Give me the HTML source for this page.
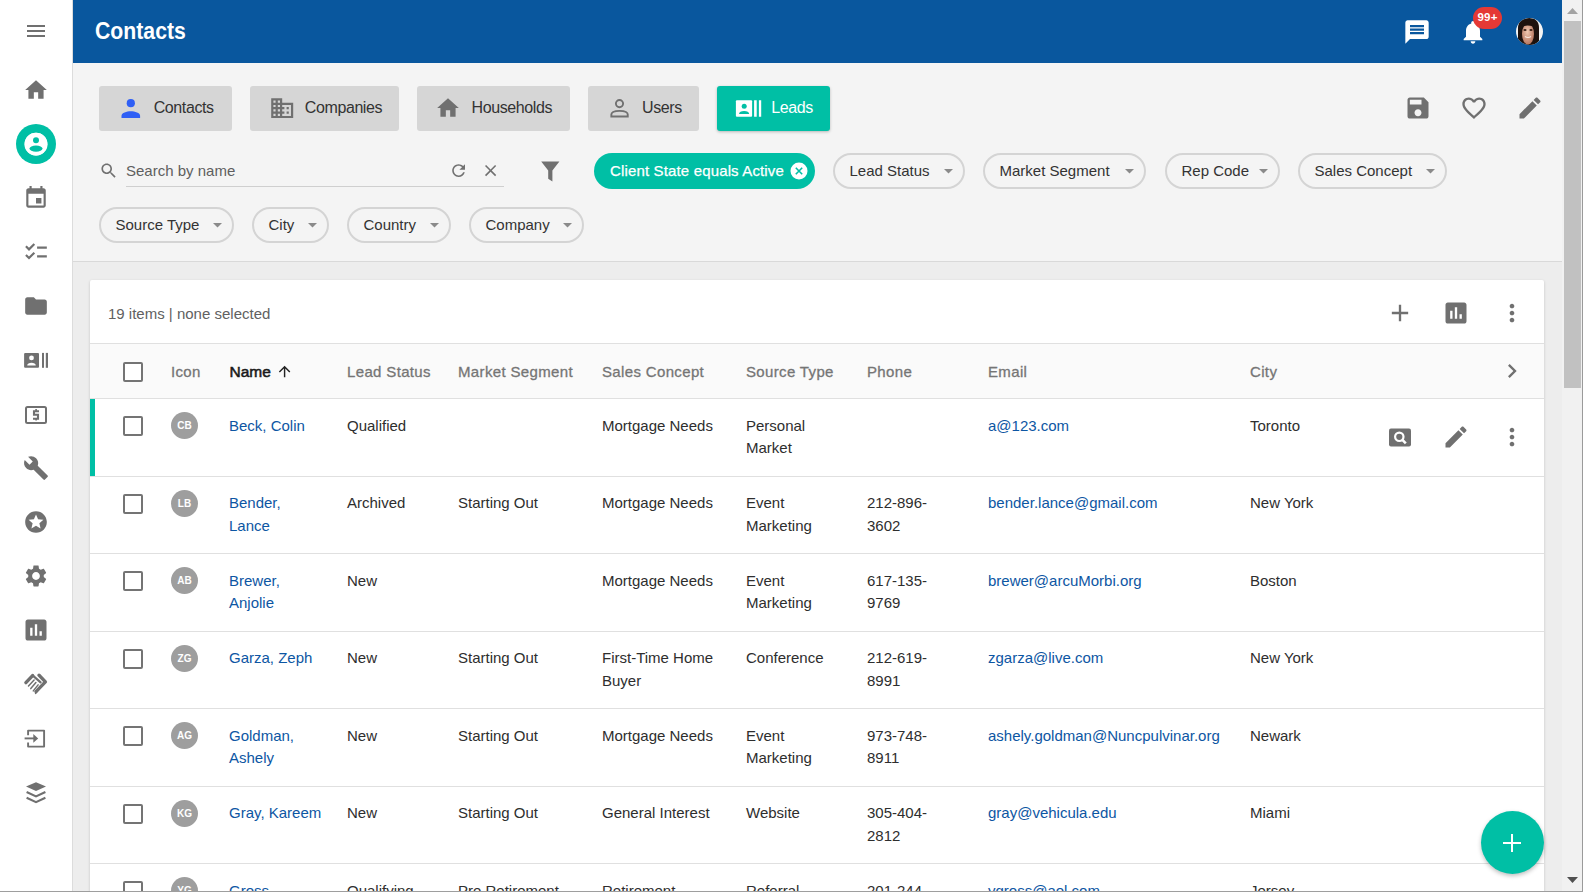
<!DOCTYPE html>
<html><head><meta charset="utf-8"><title>Contacts</title><style>
*{margin:0;padding:0;box-sizing:border-box}
html,body{width:1583px;height:892px;overflow:hidden;background:#fff;font-family:"Liberation Sans",sans-serif}
.ab{position:absolute}
svg.ab{display:block;overflow:visible}
.t{white-space:nowrap;font-size:15px;line-height:22.5px;color:#212121}
.title{font-size:24px;font-weight:bold;color:#fff;line-height:32px;transform:scaleX(0.885);transform-origin:0 0}
.tab{top:86px;height:45px;background:#d6d6d6;border-radius:3px}
.tab.act{background:#00bfa5;box-shadow:0 1px 3px rgba(0,0,0,.25)}
.tabt{font-size:16px;letter-spacing:-0.4px;color:#333;line-height:20px}
.w{color:#fff}
.ph{color:#5f5f5f;line-height:20px}
.chip{height:36px;border:2px solid #d4d4d4;border-radius:18px}
.chipt{line-height:20px;color:#333}
.chipt.w{color:#fff;-webkit-text-stroke:0.25px #fff;letter-spacing:0.15px}
.sub{color:#616161;line-height:20px}
.th{color:#757575;line-height:20px;letter-spacing:0.35px;-webkit-text-stroke:0.3px #757575}
.th.name{color:#1a1a1a;font-size:15.5px;-webkit-text-stroke:0.55px #1a1a1a;letter-spacing:0}
.td{color:#2e2e2e}
.link{color:#0d56a3}
.cb{width:20px;height:20px;border:2px solid #747474;border-radius:2px;background:#fff}
.av{width:27px;height:27px;border-radius:50%;background:#9e9e9e;color:#fff;font-size:10px;font-weight:bold;text-align:center;line-height:27px}
.card{background:#fff;border-radius:2px;box-shadow:0 1px 3px rgba(0,0,0,.18)}
.badge{left:1473px;top:7px;width:29px;height:22px;border-radius:11px;background:#e53935;color:#fff;font-size:11.5px;font-weight:bold;text-align:center;line-height:20.5px;letter-spacing:0.2px}
.fab{left:1481px;top:811px;width:63px;height:63px;border-radius:50%;background:#00bfa5;box-shadow:0 2px 4px rgba(0,0,0,.25)}
</style></head>
<body>
<div class="ab" style="left:0;top:0;width:73px;height:892px;background:#fff;border-right:1px solid #dcdcdc"></div>
<svg class="ab" style="left:24px;top:19px" width="24" height="24" viewBox="0 0 24 24" ><path fill="#707070" d="M3 18h18v-2H3v2zm0-5h18v-2H3v2zm0-7v2h18V6H3z"/></svg>
<svg class="ab" style="left:23px;top:77px" width="26" height="26" viewBox="0 0 24 24" ><path fill="#707070" d="M10 20v-6h4v6h5v-8h3L12 3 2 12h3v8z"/></svg>
<div class="ab" style="left:16px;top:124px;width:40px;height:40px;border-radius:50%;background:#00bfa5"></div>
<svg class="ab" style="left:16px;top:124px" width="40" height="40" viewBox="0 0 40 40"><circle cx="20" cy="20" r="10.2" fill="none" stroke="#fff" stroke-width="2.2"/><circle cx="20" cy="20.2" r="11.5" fill="#fff"/><circle cx="20" cy="16.3" r="3" fill="#00bfa5"/><ellipse cx="20" cy="24.6" rx="6.5" ry="3.1" fill="#00bfa5"/></svg>
<svg class="ab" style="left:23px;top:185px" width="26" height="26" viewBox="0 0 24 24" ><path fill="#707070" d="M17 12h-5v5h5v-5zM16 1v2H8V1H6v2H5c-1.11 0-1.99.9-1.99 2L3 19c0 1.1.89 2 2 2h14c1.1 0 2-.9 2-2V5c0-1.1-.9-2-2-2h-1V1h-2zm3 18H5V8h14v11z"/></svg>
<svg class="ab" style="left:23px;top:239px" width="26" height="26" viewBox="0 0 24 24" ><path fill="#707070" d="M22 7h-9v2h9V7zm0 8h-9v2h9v-2zM5.54 11L2 7.46l1.41-1.41 2.12 2.12 4.24-4.24 1.41 1.41L5.54 11zm0 8L2 15.46l1.41-1.41 2.12 2.12 4.24-4.24 1.41 1.41L5.54 19z"/></svg>
<svg class="ab" style="left:23px;top:293px" width="26" height="26" viewBox="0 0 24 24" ><path fill="#707070" d="M10 4H4c-1.1 0-1.99.9-1.99 2L2 18c0 1.1.9 2 2 2h16c1.1 0 2-.9 2-2V8c0-1.1-.9-2-2-2h-8l-2-2z"/></svg>
<svg class="ab" style="left:22px;top:350px" width="30" height="20" viewBox="0 0 30 20"><rect x="2.1" y="2.9" width="14.9" height="14.9" rx="1" fill="#707070"/><circle cx="9.5" cy="7.9" r="2.4" fill="#fff"/><path d="M5.2 15.6c0-1.9 2-2.8 4.3-2.8s4.3.9 4.3 2.8z" fill="#fff"/><rect x="20" y="2.9" width="2" height="14.9" fill="#707070"/><rect x="23.8" y="2.9" width="2.2" height="14.9" fill="#707070"/></svg>
<svg class="ab" style="left:24px;top:405px" width="24" height="20" viewBox="0 0 24 20"><rect x="2" y="2" width="20" height="16" rx="1.5" fill="none" stroke="#707070" stroke-width="2"/><path d="M15 6.2h-5v3.6h4v4H9" fill="none" stroke="#707070" stroke-width="2.1"/><rect x="11.3" y="4" width="1.6" height="2" fill="#707070"/><rect x="11.3" y="13.5" width="1.6" height="2" fill="#707070"/></svg>
<svg class="ab" style="left:23px;top:455px" width="26" height="26" viewBox="0 0 24 24" ><path fill="#707070" d="M22.7 19l-9.1-9.1c.9-2.3.4-5-1.5-6.9-2-2-5-2.4-7.4-1.3L9 6 6 9 1.6 4.7C.4 7.1.9 10.1 2.9 12.1c1.9 1.9 4.6 2.4 6.9 1.5l9.1 9.1c.4.4 1 .4 1.4 0l2.3-2.3c.5-.4.5-1.1.1-1.4z"/></svg>
<svg class="ab" style="left:23px;top:509px" width="26" height="26" viewBox="0 0 24 24" ><path fill="#707070" d="M11.99 2C6.47 2 2 6.48 2 12s4.47 10 9.99 10C17.52 22 22 17.52 22 12S17.52 2 11.99 2zm4.24 16L12 15.45 7.77 18l1.12-4.81-3.73-3.23 4.92-.42L12 5l1.92 4.53 4.92.42-3.73 3.23L16.23 18z"/></svg>
<svg class="ab" style="left:23px;top:563px" width="26" height="26" viewBox="0 0 24 24" ><path fill="#707070" d="M19.14 12.94c.04-.3.06-.61.06-.94 0-.32-.02-.64-.07-.94l2.03-1.58c.18-.14.23-.41.12-.61l-1.92-3.32c-.12-.22-.37-.29-.59-.22l-2.39.96c-.5-.38-1.03-.7-1.62-.94l-.36-2.54c-.04-.24-.24-.41-.48-.41h-3.84c-.24 0-.43.17-.47.41l-.36 2.54c-.59.24-1.13.57-1.62.94l-2.39-.96c-.22-.08-.47 0-.59.22L2.74 8.87c-.12.21-.08.47.12.61l2.03 1.58c-.05.3-.09.63-.09.94s.02.64.07.94l-2.030 1.58c-.18.14-.23.41-.12.61l1.92 3.32c.12.22.37.29.59.22l2.39-.96c.5.38 1.03.7 1.62.94l.36 2.54c.05.24.24.41.48.41h3.84c.24 0 .44-.17.47-.41l.36-2.54c.59-.24 1.13-.56 1.62-.94l2.39.96c.22.08.47 0 .59-.22l1.92-3.32c.12-.22.07-.47-.12-.61l-2.01-1.58zM12 15.6c-1.98 0-3.6-1.62-3.6-3.6s1.62-3.6 3.6-3.6 3.6 1.62 3.6 3.6-1.62 3.6-3.6 3.6z"/></svg>
<svg class="ab" style="left:22px;top:616px" width="28" height="28" viewBox="0 0 24 24" ><path fill="#707070" d="M19 3H5c-1.1 0-2 .9-2 2v14c0 1.1.9 2 2 2h14c1.1 0 2-.9 2-2V5c0-1.1-.9-2-2-2zM9 17H7v-7h2v7zm4 0h-2V7h2v10zm4 0h-2v-4h2v4z"/></svg>
<svg class="ab" style="left:20px;top:668px" width="32" height="32" viewBox="0 0 32 32"><g fill="none" stroke="#707070" stroke-linecap="round" stroke-linejoin="round"><path d="M5.9 14.6L12.6 7.6" stroke-width="3.4"/><path d="M12.6 7.4L20.6 14.4" stroke-width="2.2"/><path d="M19 7.2L25.4 13.9L16 23.6" stroke-width="3.4"/><path d="M14.1 12.1L8.5 18M15.9 14.5L10.8 20.6M18.1 16.9L13.3 22.9M20.2 19.3L15.6 25.4" stroke-width="1.5"/></g></svg>
<svg class="ab" style="left:20px;top:722px" width="32" height="32" viewBox="0 0 32 32"><g fill="none" stroke="#707070" stroke-width="1.9" stroke-linejoin="round"><path d="M8.1 13.2V8.6h16v16h-16v-4.2"/><path d="M4.6 16.4h9.5"/></g><path d="M13.3 12.1L18.2 16.4L13.3 20.7z" fill="#707070"/></svg>
<svg class="ab" style="left:20px;top:722px" width="32" height="86" viewBox="0 0 32 86"><path d="M6 64.6L16 60.2L26 64.6L16 69z" fill="#707070"/><path d="M6.6 70L16 74.4L25.4 70M6.6 75.8L16 80.2L25.4 75.8" fill="none" stroke="#707070" stroke-width="2.1"/></svg>
<div class="ab" style="left:73px;top:0;width:1489px;height:63px;background:#09579e"></div>
<div class="ab t title" style="left:95px;top:14.5px;">Contacts</div>
<svg class="ab" style="left:1403px;top:18px" width="28" height="28" viewBox="0 0 24 24" ><path fill="#fff" d="M20 2H4c-1.1 0-1.99.9-1.99 2L2 22l4-4h14c1.1 0 2-.9 2-2V4c0-1.1-.9-2-2-2zM18 14H6v-2h12v2zm0-3H6V9h12v2zm0-3H6V6h12v2z"/></svg>
<svg class="ab" style="left:1459px;top:18px" width="28" height="28" viewBox="0 0 24 24" ><path fill="#fff" d="M12 22c1.1 0 2-.9 2-2h-4c0 1.1.89 2 2 2zm6-6v-5c0-3.07-1.64-5.64-4.5-6.32V4c0-.83-.67-1.5-1.5-1.5s-1.5.67-1.5 1.5v.68C7.63 5.36 6 7.92 6 11v5l-2 2v1h16v-1l-2-2z"/></svg>
<div class="ab badge">99+</div>
<svg class="ab" style="left:1516px;top:18px" width="27" height="27" viewBox="0 0 27 27"><defs><clipPath id="av"><circle cx="13.5" cy="13.5" r="13.5"/></clipPath><radialGradient id="sk" cx="0.45" cy="0.4" r="0.6"><stop offset="0" stop-color="#f0c9b2"/><stop offset="1" stop-color="#b77760"/></radialGradient></defs><g clip-path="url(#av)"><rect width="27" height="27" fill="#f4f4f4"/><path d="M2 27V10C2 3 7 0 13 0s10 3 10 10v13l-4 4z" fill="#1d120e"/><ellipse cx="12" cy="16" rx="6" ry="10.5" fill="url(#sk)"/><path d="M6 9.5Q10 6 17 8.5L17 5Q10 3 6 7z" fill="#1d120e"/><ellipse cx="9" cy="12" rx="1.6" ry="0.9" fill="#3a2218"/><ellipse cx="15" cy="12" rx="1.6" ry="0.9" fill="#3a2218"/><path d="M9 18.5Q12 20.5 15 18.5" stroke="#fbe9e0" stroke-width="1.2" fill="none"/></g></svg>
<div class="ab" style="left:73px;top:63px;width:1489px;height:198px;background:#f4f4f4"></div>
<div class="ab" style="left:73px;top:261px;width:1489px;height:1px;background:#d9d9d9"></div>
<div class="ab" style="left:73px;top:262px;width:1489px;height:630px;background:#ededed"></div>
<div class="ab tab" style="left:99px;width:133px"></div>
<div class="ab t tabt" style="left:153.7px;top:98.3px;">Contacts</div>
<div class="ab tab" style="left:250px;width:149px"></div>
<div class="ab t tabt" style="left:304.8px;top:98.3px;">Companies</div>
<div class="ab tab" style="left:417px;width:153px"></div>
<div class="ab t tabt" style="left:471.6px;top:98.3px;">Households</div>
<div class="ab tab" style="left:588px;width:111px"></div>
<div class="ab t tabt" style="left:642px;top:98.3px;">Users</div>
<div class="ab tab act" style="left:717px;width:113px"></div>
<div class="ab t tabt w" style="left:771.3px;top:98.3px;">Leads</div>
<svg class="ab" style="left:119px;top:97px" width="24" height="24" viewBox="0 0 24 24"><circle cx="11.8" cy="6.2" r="4.1" fill="#2f5ff5"/><path d="M2.5 21v-2.2c0-3 5.2-4.6 9.3-4.6s9.3 1.6 9.3 4.6V21z" fill="#2f5ff5"/></svg>
<svg class="ab" style="left:268.6px;top:95.2px" width="26.4" height="26.4" viewBox="0 0 24 24" ><path fill="#707070" d="M12 7V3H2v18h20V7H12zM6 19H4v-2h2v2zm0-4H4v-2h2v2zm0-4H4V9h2v2zm0-4H4V5h2v2zm4 12H8v-2h2v2zm0-4H8v-2h2v2zm0-4H8V9h2v2zm0-4H8V5h2v2zm10 12h-8v-2h2v-2h-2v-2h2v-2h-2V9h8v10zm-2-8h-2v2h2v-2zm0 4h-2v2h2v-2z"/></svg>
<svg class="ab" style="left:435px;top:95px" width="26" height="26" viewBox="0 0 24 24" ><path fill="#707070" d="M10 20v-6h4v6h5v-8h3L12 3 2 12h3v8z"/></svg>
<svg class="ab" style="left:607px;top:96px" width="24" height="24" viewBox="0 0 24 24"><circle cx="12.5" cy="7.6" r="3.6" fill="none" stroke="#707070" stroke-width="1.9"/><path d="M4.35 20.45V18.6c0-2.4 3.7-3.75 8.2-3.75s8.2 1.35 8.2 3.75v1.85z" fill="none" stroke="#707070" stroke-width="1.9"/></svg>
<svg class="ab" style="left:734px;top:98px" width="30" height="20" viewBox="0 0 30 20"><rect x="1.9" y="2.25" width="16.2" height="16.5" rx="1" fill="#fff"/><circle cx="10.2" cy="8.2" r="2.5" fill="#00bfa5"/><path d="M5 15.9c0-2 2.2-3 5.1-3s5.1 1 5.1 3z" fill="#00bfa5"/><rect x="20.1" y="2.25" width="2.6" height="16.5" fill="#fff"/><rect x="24.9" y="2.25" width="2.3" height="16.5" fill="#fff"/></svg>
<svg class="ab" style="left:1404px;top:94px" width="28" height="28" viewBox="0 0 24 24" ><path fill="#707070" d="M17 3H5c-1.11 0-2 .9-2 2v14c0 1.1.89 2 2 2h14c1.1 0 2-.9 2-2V7l-4-4zm-5 16c-1.66 0-3-1.34-3-3s1.34-3 3-3 3 1.34 3 3-1.34 3-3 3zm3-10H5V5h10v4z"/></svg>
<svg class="ab" style="left:1460px;top:94px" width="28" height="28" viewBox="0 0 24 24" ><path fill="#707070" d="M16.5 3c-1.74 0-3.410.81-4.5 2.09C10.91 3.81 9.24 3 7.5 3 4.42 3 2 5.42 2 8.5c0 3.78 3.4 6.86 8.55 11.54L12 21.35l1.45-1.32C18.6 15.36 22 12.28 22 8.5 22 5.42 19.58 3 16.5 3zm-4.4 15.55l-.1.1-.1-.1C7.14 14.24 4 11.39 4 8.5 4 6.5 5.5 5 7.5 5c1.54 0 3.04.99 3.57 2.36h1.87C13.46 5.990 14.96 5 16.5 5c2 0 3.5 1.5 3.5 3.5 0 2.89-3.14 5.74-7.9 10.05z"/></svg>
<svg class="ab" style="left:1516px;top:94px" width="28" height="28" viewBox="0 0 24 24" ><path fill="#707070" d="M3 17.25V21h3.75L17.81 9.94l-3.75-3.75L3 17.25zM20.71 7.04c.39-.39.39-1.02 0-1.41l-2.34-2.34c-.39-.39-1.02-.39-1.41 0l-1.83 1.83 3.75 3.75 1.83-1.83z"/></svg>
<svg class="ab" style="left:99px;top:161.3px" width="19.5" height="19.5" viewBox="0 0 24 24" ><path fill="#707070" d="M15.5 14h-.79l-.28-.27C15.41 12.59 16 11.11 16 9.5 16 5.91 13.09 3 9.5 3S3 5.91 3 9.5 5.91 16 9.5 16c1.61 0 3.09-.59 4.23-1.57l.27.28v.79l5 4.99L20.49 19l-4.99-5zm-6 0C7.01 14 5 11.99 5 9.5S7.01 5 9.5 5 14 7.01 14 9.5 11.990 14 9.5 14z"/></svg>
<div class="ab t ph" style="left:126px;top:161px;">Search by name</div>
<div class="ab" style="left:126px;top:186px;width:378px;height:1px;background:#cfcfcf"></div>
<svg class="ab" style="left:449.3px;top:161.3px" width="19.2" height="19.2" viewBox="0 0 24 24" ><path fill="#707070" d="M17.65 6.35C16.2 4.9 14.21 4 12 4c-4.42 0-7.99 3.58-7.99 8s3.57 8 7.99 8c3.73 0 6.84-2.55 7.73-6h-2.08c-.82 2.33-3.04 4-5.65 4-3.31 0-6-2.69-6-6s2.69-6 6-6c1.66 0 3.14.69 4.22 1.78L13 11h7V4l-2.35 2.35z"/></svg>
<svg class="ab" style="left:480.8px;top:161.3px" width="19.2" height="19.2" viewBox="0 0 24 24" ><path fill="#707070" d="M19 6.41L17.59 5 12 10.59 6.41 5 5 6.41 10.59 12 5 17.59 6.41 19 12 13.41 17.59 19 19 17.59 13.41 12z"/></svg>
<svg class="ab" style="left:540px;top:160px" width="20" height="22" viewBox="0 0 20 22"><path d="M1.2 1.4H19.4L12.4 10.6V21.4L8.2 18.7V10.6Z" fill="#707070"/></svg>
<div class="ab" style="left:594px;top:153px;width:221px;height:36px;border-radius:18px;background:#00bfa5"></div>
<div class="ab t chipt w" style="left:610px;top:161px;">Client State equals Active</div>
<svg class="ab" style="left:790px;top:162px" width="18" height="18" viewBox="0 0 18 18"><circle cx="9" cy="9" r="8.5" fill="#fff"/><path d="M5.8 5.8l6.4 6.4M12.2 5.8l-6.4 6.4" stroke="#00bfa5" stroke-width="1.6"/></svg>
<div class="ab chip" style="left:833px;top:153px;width:132px"></div>
<div class="ab t chipt" style="left:849.5px;top:161px;">Lead Status</div>
<svg class="ab" style="left:944px;top:169px" width="9" height="5" viewBox="0 0 9 5"><path d="M0 0h9L4.5 4.5z" fill="#8a8a8a"/></svg>
<div class="ab chip" style="left:983px;top:153px;width:163px"></div>
<div class="ab t chipt" style="left:999.5px;top:161px;">Market Segment</div>
<svg class="ab" style="left:1125px;top:169px" width="9" height="5" viewBox="0 0 9 5"><path d="M0 0h9L4.5 4.5z" fill="#8a8a8a"/></svg>
<div class="ab chip" style="left:1165px;top:153px;width:115px"></div>
<div class="ab t chipt" style="left:1181.5px;top:161px;">Rep Code</div>
<svg class="ab" style="left:1259px;top:169px" width="9" height="5" viewBox="0 0 9 5"><path d="M0 0h9L4.5 4.5z" fill="#8a8a8a"/></svg>
<div class="ab chip" style="left:1298px;top:153px;width:149px"></div>
<div class="ab t chipt" style="left:1314.5px;top:161px;">Sales Concept</div>
<svg class="ab" style="left:1426px;top:169px" width="9" height="5" viewBox="0 0 9 5"><path d="M0 0h9L4.5 4.5z" fill="#8a8a8a"/></svg>
<div class="ab chip" style="left:99px;top:207px;width:135px"></div>
<div class="ab t chipt" style="left:115.5px;top:215px;">Source Type</div>
<svg class="ab" style="left:213px;top:223px" width="9" height="5" viewBox="0 0 9 5"><path d="M0 0h9L4.5 4.5z" fill="#8a8a8a"/></svg>
<div class="ab chip" style="left:252px;top:207px;width:77px"></div>
<div class="ab t chipt" style="left:268.5px;top:215px;">City</div>
<svg class="ab" style="left:308px;top:223px" width="9" height="5" viewBox="0 0 9 5"><path d="M0 0h9L4.5 4.5z" fill="#8a8a8a"/></svg>
<div class="ab chip" style="left:347px;top:207px;width:104px"></div>
<div class="ab t chipt" style="left:363.5px;top:215px;">Country</div>
<svg class="ab" style="left:430px;top:223px" width="9" height="5" viewBox="0 0 9 5"><path d="M0 0h9L4.5 4.5z" fill="#8a8a8a"/></svg>
<div class="ab chip" style="left:469px;top:207px;width:115px"></div>
<div class="ab t chipt" style="left:485.5px;top:215px;">Company</div>
<svg class="ab" style="left:563px;top:223px" width="9" height="5" viewBox="0 0 9 5"><path d="M0 0h9L4.5 4.5z" fill="#8a8a8a"/></svg>
<div class="ab card" style="left:90px;top:280px;width:1454px;height:640px"></div>
<div class="ab t sub" style="left:108px;top:304px;">19 items | none selected</div>
<svg class="ab" style="left:1386px;top:299px" width="28" height="28" viewBox="0 0 24 24" ><path fill="#707070" d="M19 13h-6v6h-2v-6H5v-2h6V5h2v6h6v2z"/></svg>
<svg class="ab" style="left:1442px;top:299px" width="28" height="28" viewBox="0 0 24 24" ><path fill="#707070" d="M19 3H5c-1.1 0-2 .9-2 2v14c0 1.1.9 2 2 2h14c1.1 0 2-.9 2-2V5c0-1.1-.9-2-2-2zM9 17H7v-7h2v7zm4 0h-2V7h2v10zm4 0h-2v-4h2v4z"/></svg>
<svg class="ab" style="left:1498px;top:299px" width="28" height="28" viewBox="0 0 24 24" ><path fill="#707070" d="M12 8c1.1 0 2-.9 2-2s-.9-2-2-2-2 .9-2 2 .9 2 2 2zm0 2c-1.1 0-2 .9-2 2s.9 2 2 2 2-.9 2-2-.9-2-2-2zm0 6c-1.1 0-2 .9-2 2s.9 2 2 2 2-.9 2-2-.9-2-2-2z"/></svg>
<div class="ab" style="left:90px;top:343px;width:1454px;height:1px;background:#e0e0e0"></div>
<div class="ab" style="left:90px;top:344px;width:1454px;height:54px;background:#fafafa"></div>
<div class="ab" style="left:90px;top:398px;width:1454px;height:1px;background:#e0e0e0"></div>
<div class="ab cb" style="left:123px;top:362px"></div>
<div class="ab t th" style="left:171px;top:362px;">Icon</div>
<div class="ab t th" style="left:347px;top:362px;">Lead Status</div>
<div class="ab t th" style="left:458px;top:362px;">Market Segment</div>
<div class="ab t th" style="left:602px;top:362px;">Sales Concept</div>
<div class="ab t th" style="left:746px;top:362px;">Source Type</div>
<div class="ab t th" style="left:867px;top:362px;">Phone</div>
<div class="ab t th" style="left:988px;top:362px;">Email</div>
<div class="ab t th" style="left:1250px;top:362px;">City</div>
<div class="ab t th name" style="left:229.5px;top:361.5px;">Name</div>
<svg class="ab" style="left:275.6px;top:363.3px" width="17.2" height="17.2" viewBox="0 0 24 24" ><path fill="#222" d="M4 12l1.41 1.41L11 7.83V20h2V7.83l5.58 5.59L20 12l-8-8-8 8z"/></svg>
<svg class="ab" style="left:1498px;top:357px" width="28" height="28" viewBox="0 0 24 24" ><path fill="#707070" d="M10 6L8.59 7.41 13.17 12l-4.58 4.59L10 18l6-6z"/></svg>
<div class="ab" style="left:90px;top:475.5px;width:1454px;height:1px;background:#e0e0e0"></div>
<div class="ab cb" style="left:123px;top:416px"></div>
<div class="ab av" style="left:171px;top:412.4px">CB</div>
<div class="ab t td link" style="left:229px;top:414.5px;">Beck, Colin</div>
<div class="ab t td" style="left:347px;top:414.5px;">Qualified</div>
<div class="ab t td" style="left:458px;top:414.5px;"></div>
<div class="ab t td" style="left:602px;top:414.5px;">Mortgage Needs</div>
<div class="ab t td" style="left:746px;top:414.5px;">Personal<br>Market</div>
<div class="ab t td" style="left:867px;top:414.5px;"></div>
<div class="ab t td link" style="left:988px;top:414.5px;">a@123.com</div>
<div class="ab t td" style="left:1250px;top:414.5px;">Toronto</div>
<div class="ab" style="left:90px;top:553.0px;width:1454px;height:1px;background:#e0e0e0"></div>
<div class="ab cb" style="left:123px;top:493.5px"></div>
<div class="ab av" style="left:171px;top:489.9px">LB</div>
<div class="ab t td link" style="left:229px;top:492.0px;">Bender,<br>Lance</div>
<div class="ab t td" style="left:347px;top:492.0px;">Archived</div>
<div class="ab t td" style="left:458px;top:492.0px;">Starting Out</div>
<div class="ab t td" style="left:602px;top:492.0px;">Mortgage Needs</div>
<div class="ab t td" style="left:746px;top:492.0px;">Event<br>Marketing</div>
<div class="ab t td" style="left:867px;top:492.0px;">212-896-<br>3602</div>
<div class="ab t td link" style="left:988px;top:492.0px;">bender.lance@gmail.com</div>
<div class="ab t td" style="left:1250px;top:492.0px;">New York</div>
<div class="ab" style="left:90px;top:630.5px;width:1454px;height:1px;background:#e0e0e0"></div>
<div class="ab cb" style="left:123px;top:571px"></div>
<div class="ab av" style="left:171px;top:567.4px">AB</div>
<div class="ab t td link" style="left:229px;top:569.5px;">Brewer,<br>Anjolie</div>
<div class="ab t td" style="left:347px;top:569.5px;">New</div>
<div class="ab t td" style="left:458px;top:569.5px;"></div>
<div class="ab t td" style="left:602px;top:569.5px;">Mortgage Needs</div>
<div class="ab t td" style="left:746px;top:569.5px;">Event<br>Marketing</div>
<div class="ab t td" style="left:867px;top:569.5px;">617-135-<br>9769</div>
<div class="ab t td link" style="left:988px;top:569.5px;">brewer@arcuMorbi.org</div>
<div class="ab t td" style="left:1250px;top:569.5px;">Boston</div>
<div class="ab" style="left:90px;top:708.0px;width:1454px;height:1px;background:#e0e0e0"></div>
<div class="ab cb" style="left:123px;top:648.5px"></div>
<div class="ab av" style="left:171px;top:644.9px">ZG</div>
<div class="ab t td link" style="left:229px;top:647.0px;">Garza, Zeph</div>
<div class="ab t td" style="left:347px;top:647.0px;">New</div>
<div class="ab t td" style="left:458px;top:647.0px;">Starting Out</div>
<div class="ab t td" style="left:602px;top:647.0px;">First-Time Home<br>Buyer</div>
<div class="ab t td" style="left:746px;top:647.0px;">Conference</div>
<div class="ab t td" style="left:867px;top:647.0px;">212-619-<br>8991</div>
<div class="ab t td link" style="left:988px;top:647.0px;">zgarza@live.com</div>
<div class="ab t td" style="left:1250px;top:647.0px;">New York</div>
<div class="ab" style="left:90px;top:785.5px;width:1454px;height:1px;background:#e0e0e0"></div>
<div class="ab cb" style="left:123px;top:726px"></div>
<div class="ab av" style="left:171px;top:722.4px">AG</div>
<div class="ab t td link" style="left:229px;top:724.5px;">Goldman,<br>Ashely</div>
<div class="ab t td" style="left:347px;top:724.5px;">New</div>
<div class="ab t td" style="left:458px;top:724.5px;">Starting Out</div>
<div class="ab t td" style="left:602px;top:724.5px;">Mortgage Needs</div>
<div class="ab t td" style="left:746px;top:724.5px;">Event<br>Marketing</div>
<div class="ab t td" style="left:867px;top:724.5px;">973-748-<br>8911</div>
<div class="ab t td link" style="left:988px;top:724.5px;">ashely.goldman@Nuncpulvinar.org</div>
<div class="ab t td" style="left:1250px;top:724.5px;">Newark</div>
<div class="ab" style="left:90px;top:863.0px;width:1454px;height:1px;background:#e0e0e0"></div>
<div class="ab cb" style="left:123px;top:803.5px"></div>
<div class="ab av" style="left:171px;top:799.9px">KG</div>
<div class="ab t td link" style="left:229px;top:802.0px;">Gray, Kareem</div>
<div class="ab t td" style="left:347px;top:802.0px;">New</div>
<div class="ab t td" style="left:458px;top:802.0px;">Starting Out</div>
<div class="ab t td" style="left:602px;top:802.0px;">General Interest</div>
<div class="ab t td" style="left:746px;top:802.0px;">Website</div>
<div class="ab t td" style="left:867px;top:802.0px;">305-404-<br>2812</div>
<div class="ab t td link" style="left:988px;top:802.0px;">gray@vehicula.edu</div>
<div class="ab t td" style="left:1250px;top:802.0px;">Miami</div>
<div class="ab cb" style="left:123px;top:881px"></div>
<div class="ab av" style="left:171px;top:877.4px">YG</div>
<div class="ab t td link" style="left:229px;top:879.5px;">Gross,<br>Yolanda</div>
<div class="ab t td" style="left:347px;top:879.5px;">Qualifying</div>
<div class="ab t td" style="left:458px;top:879.5px;">Pre Retirement</div>
<div class="ab t td" style="left:602px;top:879.5px;">Retirement<br>Planning</div>
<div class="ab t td" style="left:746px;top:879.5px;">Referral</div>
<div class="ab t td" style="left:867px;top:879.5px;">201-244-<br>1111</div>
<div class="ab t td link" style="left:988px;top:879.5px;">ygross@aol.com</div>
<div class="ab t td" style="left:1250px;top:879.5px;">Jersey<br>City</div>
<div class="ab" style="left:90px;top:399px;width:5px;height:77px;background:#00bfa5"></div>
<svg class="ab" style="left:1386px;top:424px" width="28" height="28" viewBox="0 0 28 28"><rect x="3" y="4.5" width="22" height="18" rx="2" fill="#707070"/><circle cx="13.3" cy="12.8" r="4.2" fill="none" stroke="#fff" stroke-width="2.2"/><path d="M16.2 15.7l3.6 3.6" stroke="#fff" stroke-width="2.6"/></svg>
<svg class="ab" style="left:1442px;top:423px" width="28" height="28" viewBox="0 0 24 24" ><path fill="#707070" d="M3 17.25V21h3.75L17.81 9.94l-3.75-3.75L3 17.25zM20.71 7.04c.39-.39.39-1.02 0-1.41l-2.34-2.34c-.39-.39-1.02-.39-1.41 0l-1.83 1.83 3.75 3.75 1.83-1.83z"/></svg>
<svg class="ab" style="left:1498px;top:423px" width="28" height="28" viewBox="0 0 24 24" ><path fill="#707070" d="M12 8c1.1 0 2-.9 2-2s-.9-2-2-2-2 .9-2 2 .9 2 2 2zm0 2c-1.1 0-2 .9-2 2s.9 2 2 2 2-.9 2-2-.9-2-2-2zm0 6c-1.1 0-2 .9-2 2s.9 2 2 2 2-.9 2-2-.9-2-2-2z"/></svg>
<div class="ab fab"></div>
<svg class="ab" style="left:1503px;top:834px" width="18" height="18" viewBox="0 0 18 18"><path d="M8 0h2v8h8v2h-8v8H8v-8H0V8h8z" fill="#fff"/></svg>
<div class="ab" style="left:1562px;top:0;width:21px;height:892px;background:#f1f1f1"></div>
<div class="ab" style="left:1564px;top:21px;width:17px;height:367px;background:#c1c1c1"></div>
<svg class="ab" style="left:1567px;top:8px" width="11" height="6" viewBox="0 0 11 6"><path d="M0 6L5.5 0L11 6z" fill="#a3a3a3"/></svg>
<svg class="ab" style="left:1567px;top:877px" width="11" height="6" viewBox="0 0 11 6"><path d="M0 0L5.5 6L11 0z" fill="#505050"/></svg>
<div class="ab" style="left:1582px;top:0;width:1px;height:892px;background:#9a9a9a"></div>
<div class="ab" style="left:0;top:891px;width:1583px;height:1px;background:#9e9e9e"></div>
</body></html>
